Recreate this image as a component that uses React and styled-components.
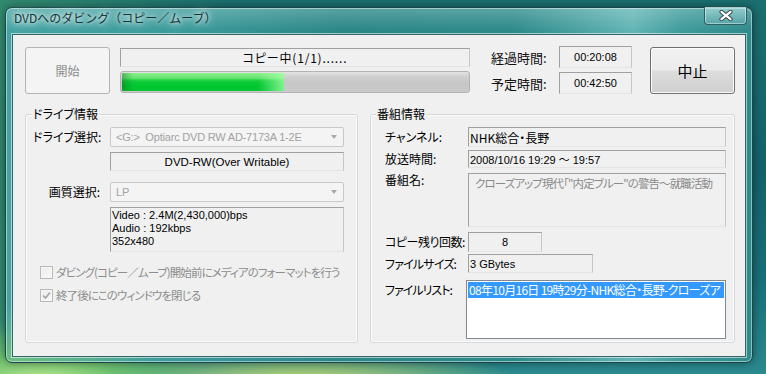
import React from 'react';
import styled, { createGlobalStyle } from 'styled-components';

const GlobalStyle = createGlobalStyle`
  html, body { margin: 0; padding: 0; }
  body {
    width: 766px; height: 374px; overflow: hidden;
    font-family: "Noto Sans CJK JP", sans-serif;
    font-feature-settings: "palt";
  }
`;

const LATIN = `"Liberation Sans", "Noto Sans CJK JP", sans-serif`;

const Desktop = styled.div`
  width: 766px; height: 374px; box-sizing: border-box;
  padding: 7px 0 0 5px;
  background:
    radial-gradient(ellipse 170px 60px at 40px 380px, #b4e58a 0%, #6cc070 45%, rgba(70,160,110,0) 100%),
    radial-gradient(ellipse 220px 40px at 300px 384px, #c9dd6e 0%, rgba(140,190,90,0) 100%),
    linear-gradient(90deg, rgba(60,150,110,0.7) 0%, rgba(40,120,110,0) 30%),
    linear-gradient(180deg, #1b6f70 0%, #13626a 45%, #186f78 75%, #2b8a8e 100%);
`;

const Window = styled.div`
  width: 748px; height: 356px; box-sizing: border-box;
  border: 1px solid #1a474c;
  border-radius: 7px;
  padding: 0 6px 5px 6px;
  display: flex; flex-direction: column;
  background:
    linear-gradient(180deg, rgba(255,255,255,0.22) 0px, rgba(255,255,255,0) 22px),
    radial-gradient(ellipse 160px 60px at 0px 356px, rgba(120,200,120,0.8), rgba(120,200,120,0)),
    linear-gradient(90deg, #45a3a3 0%, #3c9c9c 22%, #2c8787 45%, #2e8a8a 68%, #63b5b5 84%, #3e9a9a 91%, #2f8a8c 100%);
  box-shadow: inset 0 0 0 1px rgba(255,255,255,0.45), 0 0 8px rgba(0,0,0,0.45);
`;

const TitleBar = styled.div`
  height: 26px; margin: 0 -6px; padding: 0 5px 0 8px;
  display: flex; align-items: flex-start; justify-content: space-between;
`;

const Title = styled.div`
  margin-top: 1px;
  font-size: 12px; line-height: 16px; padding-top: 1px;
  color: #173638;
  font-feature-settings: normal;
  text-shadow: 0 0 4px rgba(255,255,255,0.95), 0 0 9px rgba(255,255,255,0.85), 0 0 14px rgba(230,255,255,0.7);
`;

const CloseButton = styled.div`
  margin-top: -1px;
  width: 43px; height: 18px; box-sizing: border-box;
  border: 1px solid #2c5e62; border-top: none;
  border-radius: 0 0 4px 4px;
  background: linear-gradient(180deg, rgba(190,235,235,0.55), rgba(120,190,195,0.35));
  box-shadow: inset 0 0 0 1px rgba(255,255,255,0.45);
  display: flex; align-items: center; justify-content: center;
`;

const Client = styled.div`
  flex: 1; box-sizing: border-box;
  background: #f0f0f0;
  border: 1px solid #35656a;
  box-shadow: 0 0 0 1px rgba(255,255,255,0.55);
  padding: 11px 10px 13px 12px;
  display: flex; flex-direction: column;
`;

const TopRow = styled.div`
  display: flex; align-items: center; height: 48px;
`;

const PushButton = styled.div`
  width: 85px; height: 47px; box-sizing: border-box; flex: none;
  border: 1px solid ${p => (p.$disabled ? '#b0b4b7' : '#707070')};
  border-radius: 3px;
  background: ${p => (p.$disabled
    ? '#f4f4f4'
    : 'linear-gradient(180deg, #f2f2f2 0%, #ebebeb 48%, #dddddd 52%, #cfcfcf 100%)')};
  box-shadow: inset 0 0 0 1px ${p => (p.$disabled ? '#f4f4f4' : '#fbfbfb')};
  color: ${p => (p.$disabled ? '#8a8a8a' : '#000')};
  font-size: ${p => p.$size}px;
  display: flex; align-items: center; justify-content: center;
  margin-left: ${p => p.$ml || 0}px;
`;

const ProgressCol = styled.div`
  width: 350px; margin-left: 10px;
  display: flex; flex-direction: column; gap: 4px;
`;

const Field = styled.div`
  box-sizing: border-box; flex: ${p => (p.$w ? 'none' : 1)}; min-width: 0;
  width: ${p => (p.$w ? `${p.$w}px` : 'auto')};
  height: ${p => p.$h}px;
  border: 1px solid; border-color: #a0a0a0 #c6c6c6 #e4e4e4 #a0a0a0;
  background: #f0f0f0;
  display: flex;
  align-items: ${p => (p.$top ? 'flex-start' : 'center')};
  justify-content: ${p => (p.$center ? 'center' : 'flex-start')};
  padding: ${p => p.$pad || '0 1px'};
  font-family: ${p => (p.$latin ? LATIN : `"Noto Sans CJK JP", sans-serif`)};
  font-size: ${p => p.$fs || 12}px;
  letter-spacing: ${p => p.$ls || 0}px;
  color: ${p => p.$color || '#000'};
  white-space: nowrap; overflow: hidden;
  margin-left: ${p => p.$ml || 0}px;
`;

const ProgressTrack = styled.div`
  height: 22px; box-sizing: border-box;
  border: 1px solid #b3b3b3; border-radius: 3px;
  background: linear-gradient(180deg, #e3e3e3 0%, #cecece 25%, #c6c6c6 60%, #cbcbcb 100%);
  overflow: hidden; padding: 1px;
`;

const ProgressFill = styled.div`
  height: 100%; border-radius: 1px;
  background:
    linear-gradient(90deg, rgba(0,90,20,0.35) 0%, rgba(0,90,20,0) 7%, rgba(0,0,0,0) 84%, rgba(170,255,170,0.75) 100%),
    linear-gradient(180deg, #8cf08c 0%, #63e46f 28%, #10cc3a 45%, #00c62e 75%, #05c434 100%);
`;

const TimeGrid = styled.div`
  margin-left: 21px;
  display: grid; grid-template-columns: 68px 73px; grid-template-rows: 22px 22px;
  row-gap: 4px; align-items: center;
`;

const TimeLabel = styled.div`
  font-size: 13px; color: #111; white-space: nowrap;
  font-feature-settings: normal;
`;

const GroupsRow = styled.div`
  flex: 1; margin-top: 12px;
  display: flex; gap: 12px;
`;

const Group = styled.fieldset`
  margin: 0; padding: 0; min-width: 0;
  width: ${p => p.$w}px; box-sizing: border-box; flex: none;
  border: 1px solid #d3d9dc; border-radius: 3px;
  box-shadow: inset 0 0 0 1px #fbfbfb;
`;

const Legend = styled.legend`
  margin-left: ${p => p.$ml}px; padding: 0 1px;
  font-size: 12px; line-height: 16px; color: #000;
  background: #f0f0f0;
`;

const GroupBody = styled.div`
  padding: ${p => p.$pad};
  display: flex; flex-direction: column;
`;

const Row = styled.div`
  display: flex; align-items: ${p => (p.$top ? 'flex-start' : 'center')};
  margin-top: ${p => p.$mt || 0}px;
  min-width: 0;
`;

const Label = styled.div`
  flex: none; width: ${p => p.$w}px; box-sizing: border-box;
  text-align: ${p => (p.$right ? 'right' : 'left')};
  padding-right: ${p => (p.$right ? 10 : 0)}px;
  margin-top: ${p => p.$mt || 0}px;
  font-size: 12px; line-height: 16px; color: #000; white-space: nowrap;
  letter-spacing: ${p => p.$ls || 0}px;
`;

const Combo = styled.div`
  flex: 1; height: 20px; box-sizing: border-box; min-width: 0;
  border: 1px solid #c8c8c8; border-radius: 2px;
  background: #f4f4f4;
  display: flex; align-items: center; justify-content: space-between;
  padding: 0 5px 0 5px;
  font-family: ${LATIN}; font-size: 11px; letter-spacing: -0.2px; color: #a2a2a2; white-space: pre;
`;

const Arrow = styled.div`
  width: 0; height: 0;
  border-left: 3.5px solid transparent; border-right: 3.5px solid transparent;
  border-top: 4px solid #a9a9a9;
  margin-right: 1px;
`;

const InfoLines = styled.div`
  display: flex; flex-direction: column;
  line-height: 13px;
`;

const CheckRow = styled.label`
  display: flex; align-items: center; height: 18px;
  margin-top: ${p => p.$mt}px; padding-left: 7px;
  font-size: 11.5px; letter-spacing: -0.9px; color: #8d8d8d; white-space: nowrap;
`;

const CheckBox = styled.span`
  width: 13px; height: 13px; box-sizing: border-box; flex: none;
  border: 1px solid #b9b9b9;
  background: linear-gradient(135deg, #ececec, #f8f8f8);
  box-shadow: inset 0 0 0 1px #f6f6f6;
  margin-right: 3px;
  display: flex; align-items: center; justify-content: center;
`;

const ListBox = styled.div`
  flex: 1; min-width: 0; height: 59px; box-sizing: border-box;
  margin-left: -2px;
  border: 1px solid #828790;
  background: #fff; padding: 1px;
`;

const ListItem = styled.div`
  height: 16px; line-height: 16px; padding-left: 1px;
  background: ${p => (p.$selected ? '#3399ff' : 'transparent')};
  color: ${p => (p.$selected ? '#fff' : '#000')};
  font-size: 12px; letter-spacing: -0.7px; white-space: nowrap; overflow: hidden;
`;

function CloseGlyph() {
  return (
    <svg width="14" height="11" viewBox="0 0 14 11">
      <path d="M2.5 1.8 L11.5 9.2 M11.5 1.8 L2.5 9.2" stroke="#3a4a50" strokeWidth="4.2" strokeLinecap="round" />
      <path d="M2.5 1.8 L11.5 9.2 M11.5 1.8 L2.5 9.2" stroke="#ffffff" strokeWidth="2.2" strokeLinecap="round" />
    </svg>
  );
}

function CheckMark() {
  return (
    <svg width="9" height="9" viewBox="0 0 9 9">
      <path d="M1 4.5 L3.5 7 L8 1.5" fill="none" stroke="#a3a3a3" strokeWidth="1.6" />
    </svg>
  );
}

export default function App() {
  return (
    <>
      <GlobalStyle />
      <Desktop>
        <Window>
          <TitleBar>
            <Title>DVDへのダビング（コピー／ムーブ）</Title>
            <CloseButton><CloseGlyph /></CloseButton>
          </TitleBar>
          <Client>
            <TopRow>
              <PushButton $disabled $size={12}>開始</PushButton>
              <ProgressCol>
                <Field $h={22} $center $fs={12} $ls={0.8}>コピー中(1/1)......</Field>
                <ProgressTrack>
                  <ProgressFill style={{ width: `${(162 / 346) * 100}%` }} />
                </ProgressTrack>
              </ProgressCol>
              <TimeGrid>
                <TimeLabel>経過時間:</TimeLabel>
                <Field $h={22} $center $latin $fs={11}>00:20:08</Field>
                <TimeLabel>予定時間:</TimeLabel>
                <Field $h={22} $center $latin $fs={11}>00:42:50</Field>
              </TimeGrid>
              <PushButton $size={15} $ml={18}>中止</PushButton>
            </TopRow>

            <GroupsRow>
              <Group $w={333}>
                <Legend $ml={6}>ドライブ情報</Legend>
                <GroupBody $pad="5px 13px 0 7px">
                  <Row>
                    <Label $w={77} $right>ドライブ選択:</Label>
                    <Combo><span>{'<G:>  Optiarc DVD RW AD-7173A 1-2E'}</span><Arrow /></Combo>
                  </Row>
                  <Row $mt={5}>
                    <Label $w={77} />
                    <Field $h={19} $center $latin $fs={11.5}>DVD-RW(Over Writable)</Field>
                  </Row>
                  <Row $mt={11}>
                    <Label $w={77} $right>画質選択:</Label>
                    <Combo><span>LP</span><Arrow /></Combo>
                  </Row>
                  <Row $mt={5}>
                    <Label $w={77} />
                    <Field $h={45} $top $latin $fs={11} $pad="1px 1px">
                      <InfoLines>
                        <span>Video : 2.4M(2,430,000)bps</span>
                        <span>Audio : 192kbps</span>
                        <span>352x480</span>
                      </InfoLines>
                    </Field>
                  </Row>
                  <CheckRow $mt={11}>
                    <CheckBox />
                    ダビング(コピー／ムーブ)開始前にメディアのフォーマットを行う
                  </CheckRow>
                  <CheckRow $mt={5}>
                    <CheckBox><CheckMark /></CheckBox>
                    終了後にこのウィンドウを閉じる
                  </CheckRow>
                </GroupBody>
              </Group>

              <Group $w={365}>
                <Legend $ml={5}>番組情報</Legend>
                <GroupBody $pad="5px 8px 0 14px">
                  <Row>
                    <Label $w={83}>チャンネル:</Label>
                    <Field $h={20} $fs={12}>NHK総合・長野</Field>
                  </Row>
                  <Row $mt={3}>
                    <Label $w={83}>放送時間:</Label>
                    <Field $h={18} $latin $fs={11}>2008/10/16 19:29 〜 19:57</Field>
                  </Row>
                  <Row $mt={5} $top>
                    <Label $w={83} $mt={-1}>番組名:</Label>
                    <Field $h={54} $top $fs={11.5} $ls={-0.9} $color="#8a8a8a" $pad="1px 6px">
                      クローズアップ現代「"内定ブルー"の警告〜就職活動
                    </Field>
                  </Row>
                  <Row $mt={5}>
                    <Label $w={83} $ls={-0.5}>コピー残り回数:</Label>
                    <Field $h={20} $w={74} $center $latin $fs={11}>8</Field>
                  </Row>
                  <Row $mt={2}>
                    <Label $w={83} $ls={-0.8}>ファイルサイズ:</Label>
                    <Field $h={19} $w={125} $latin $fs={11}>3 GBytes</Field>
                  </Row>
                  <Row $mt={7} $top>
                    <Label $w={83} $mt={2} $ls={-1}>ファイルリスト:</Label>
                    <ListBox>
                      <ListItem $selected>08年10月16日 19時29分-NHK総合・長野-クローズア</ListItem>
                    </ListBox>
                  </Row>
                </GroupBody>
              </Group>
            </GroupsRow>
          </Client>
        </Window>
      </Desktop>
    </>
  );
}
